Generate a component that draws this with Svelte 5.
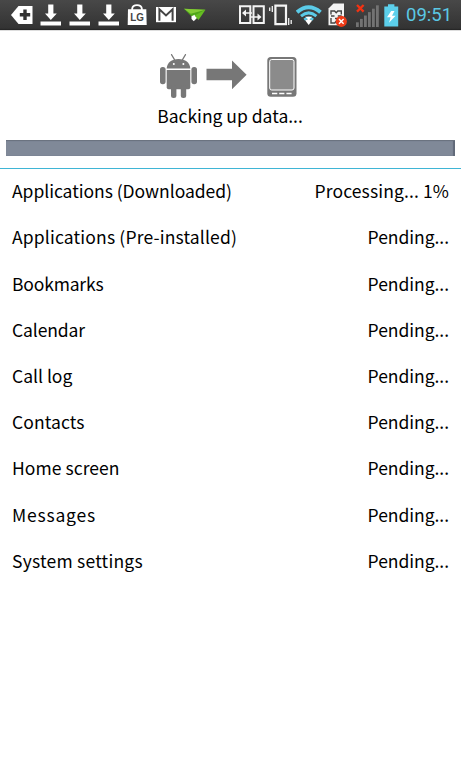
<script>
  const rows = [
    { name: 'Applications (Downloaded)', state: 'Processing... 1%', track: -0.04, stateTrack: 0.12 },
    { name: 'Applications (Pre-installed)', state: 'Pending...', track: 0.16, stateTrack: -0.04 },
    { name: 'Bookmarks', state: 'Pending...', track: -0.18, stateTrack: -0.04 },
    { name: 'Calendar', state: 'Pending...', track: -0.12, stateTrack: -0.04 },
    { name: 'Call log', state: 'Pending...', track: 0, stateTrack: -0.04 },
    { name: 'Contacts', state: 'Pending...', track: 0.1, stateTrack: -0.04 },
    { name: 'Home screen', state: 'Pending...', track: 0.06, stateTrack: -0.04 },
    { name: 'Messages', state: 'Pending...', track: 0.78, stateTrack: -0.04 },
    { name: 'System settings', state: 'Pending...', track: 0.22, stateTrack: -0.04 }
  ];
  const downloads = [1, 2, 3];
  const bars = [0, 1, 2, 3, 4, 5];
</script>

<div class="screen">
  <header class="status">
    <div class="group left">
      <svg width="26" height="30" viewBox="0 0 26 30">
        <path d="M0 15 7.5 6H21.5V24H7.5Z" fill="#fff" />
        <path d="M14 9.5V20M8.8 14.7H19.2" stroke="#333" stroke-width="3.4" />
      </svg>
      {#each downloads as d (d)}
        <svg width="29" height="30" viewBox="0 0 29 30">
          <path d="M8.2 4.5h5.2v9h3.4L10.8 20 5 13.5h3.2Z" fill="#fff" />
          <path d="M.5 21.5h20.5v4H.5Z" fill="#fff" />
        </svg>
      {/each}
      <svg width="29" height="30" viewBox="0 0 29 30">
        <path d="M5.2 11V8.5q.5-3.4 4.8-3.4t4.8 3.4V11" fill="none" stroke="#fff" stroke-width="1.8" />
        <path d="M1 9.3H19.3L19.7 25H.7Z" fill="#fff" />
        <text x="3.2" y="21.3" class="lg" textLength="13.7" lengthAdjust="spacingAndGlyphs">LG</text>
      </svg>
      <svg width="28" height="30" viewBox="0 0 28 30">
        <path d="M0 7h20v15.2H0Z" fill="#fff" />
        <path d="M3.4 20.7V9.2L10 15.4 16.6 9.2v11.5" fill="none" stroke="#444" stroke-width="2" />
      </svg>
      <svg width="22" height="30" viewBox="0 0 22 30">
        <path d="M0 8.8 21.5 9.8 11 20Z" fill="#4ea619" />
        <path d="M0 8.8 21.5 9.8 6.8 13.8Z" fill="#85cc36" />
        <path d="m7.5 16.2 3.2-1.4 2.6 2.7-3.5 3.8-2.3-2.4Z" fill="#fff" />
        <path d="M21.5 9.8 14.5 20l-4-4.5Z" fill="#65bc21" />
      </svg>
    </div>
    <div class="group right">
      <svg width="30" height="30" viewBox="0 0 30 30">
        <path d="M1 6.2h10.3v16.8H1ZM14.5 6.2h10.3v16.8H14.5Z" fill="none" stroke="#f4f4f4" stroke-width="2" />
        <path d="M5 13h8M12 17h8" stroke="#f4f4f4" stroke-width="1.6" />
        <path d="m3 13 4-3.6v7.2ZM22.5 17l-4-3.6v7.2Z" fill="#f4f4f4" />
      </svg>
      <svg width="27" height="30" viewBox="0 0 27 30">
        <path d="M6.4 5.7H17v18.5H6.4Z" fill="none" stroke="#f4f4f4" stroke-width="2.2" />
        <path d="M3.3 6v6M.7 7.5v3.4M19.7 18v7M22.2 20v4" stroke="#f4f4f4" stroke-width="1.3" />
      </svg>
      <svg width="31" height="30" viewBox="0 0 31 30">
        <g fill="none" stroke="#5bcbe8">
          <path d="M1 12.2Q12.7 2.2 24.5 12.2" stroke-width="4" />
          <path d="M5 16.1Q12.7 9.7 20.4 16.1" stroke-width="3" />
          <path d="M8.3 19.7Q12.7 16.2 17.1 19.7" stroke-width="2.6" />
        </g>
        <path d="m9.3 20.5 3.4-1.8 3.4 1.8-3.4 4.5Z" fill="#fff" />
        <path d="M9.2 16.8h7l-3.5 3Z" fill="#fff" />
      </svg>
      <svg width="29" height="30" viewBox="0 0 29 30">
        <path d="M1.5 8.5 6.5 3.5H17V25.3H1.5Z" fill="#f4f4f4" />
        <path d="M4 14.5V11h3.6l1.6 1.8 1.6-1.8h3.5v3.5M4 18v5h3.8l1.5-2M4 16h3.5M10.8 16h3.8M8 18.5h4" fill="none" stroke="#444" stroke-width="1.4" />
        <circle cx="14.3" cy="21.4" r="5.6" fill="#ee3b18" />
        <path d="m12 19.1 4.6 4.6m0-4.6L12 23.7" stroke="#fff" stroke-width="1.4" />
      </svg>
      <svg width="28" height="30" viewBox="0 0 28 30">
        {#each bars as b (b)}
          <rect x={b * 4} y={22.3 - b * 3.4} width="2.8" height={4.7 + b * 3.4} fill="#737373" />
        {/each}
        <path d="m1 5 6.6 6.6m0-6.6L1 11.6" stroke="#f33212" stroke-width="2.3" />
      </svg>
      <svg width="22" height="30" viewBox="0 0 22 30">
        <path d="M4 4.2h6.4v2.4h3.8v20H.3v-20H4Z" fill="#5ccfeb" />
        <path d="M7.2 11 3 17.2h3.6l-1.6 5.6 6.6-7H8l2.5-4.8Z" fill="#fff" />
      </svg>
      <span class="clock">09:51</span>
    </div>
  </header>

  <section class="progress">
    <div class="transfer">
      <svg width="40" height="48" viewBox="0 0 40 48">
        <g fill="#777">
          <path d="M6.7 17.5C7.2 11.5 11.5 8 18.5 8s11.3 3.5 11.8 9.5Z" />
          <path d="M6.7 19h23.6v17.3q0 2-2 2H8.7q-2 0-2-2Z" />
          <rect x="0" y="16" width="5.6" height="17.2" rx="2.6" />
          <rect x="31.4" y="16" width="5.6" height="17.2" rx="2.6" />
          <rect x="11" y="34" width="5.4" height="13" rx="2.5" />
          <rect x="20.8" y="34" width="5.4" height="13" rx="2.5" />
        </g>
        <path d="m11.5 3.6 3 5M25.5 3.6l-3 5" stroke="#777" stroke-width="1.2" stroke-linecap="round" />
        <circle cx="13.8" cy="13" r="1" fill="#fff" />
        <circle cx="23.4" cy="13" r="1" fill="#fff" />
      </svg>
      <svg class="arrow" width="41" height="48" viewBox="0 0 41 48">
        <path d="M0.5 17.8h25.5V9.6L40.6 23.8 26 38.3v-9H.5Z" fill="#777" />
      </svg>
      <svg width="30" height="48" viewBox="0 0 30 48">
        <rect x=".3" y="5.9" width="29.2" height="39.8" rx="3.5" fill="#777" />
        <rect x="2.7" y="8.5" width="24.3" height="30.5" rx="2" fill="#8b8b8b" stroke="#fff" stroke-width="1" />
        <path d="M5 42.5h5.3M12.2 42.5h5.2M19.4 42.5h5.2" stroke="#fff" stroke-width="1.7" />
      </svg>
    </div>
    <p class="caption">Backing up data...</p>
    <div class="bar"></div>
  </section>

  <ul class="list">
    {#each rows as row (row.name)}
      <li>
        <span style="letter-spacing: {row.track}px">{row.name}</span>
        <span style="letter-spacing: {row.stateTrack}px">{row.state}</span>
      </li>
    {/each}
  </ul>
</div>

<style>
  :global(body) {
    margin: 0;
    background: #fff;
  }
  .screen {
    height: 768px;
    overflow: hidden;
    background: #fff;
    color: #000;
    font-family: 'Noto Sans CJK KR', 'Open Sans', sans-serif;
    font-size: 17.5px;
  }
  .status {
    box-sizing: border-box;
    height: 30px;
    padding: 0 9px 0 11px;
    display: flex;
    justify-content: space-between;
    background: linear-gradient(#484848, #333 94%, #222);
    box-shadow: 0 1px #ddd;
  }
  .group {
    display: flex;
  }
  .group svg,
  .transfer svg {
    display: block;
    flex: none;
  }
  .left svg:first-child {
    margin-right: 3px;
  }
  .lg {
    font: bold 11.5px 'Liberation Sans', sans-serif;
    fill: #444;
  }
  .clock {
    width: 46px;
    font: 18.5px/31px Roboto, sans-serif;
    color: #5bc8e4;
    white-space: nowrap;
  }
  .progress {
    box-sizing: border-box;
    height: 139px;
    padding: 21px 6px 0;
    border-bottom: 1px solid #3fb5d5;
  }
  .transfer {
    display: flex;
    padding-left: 154px;
  }
  .arrow {
    margin: 0 20px 0 6px;
  }
  .caption {
    margin: 3px 0 0;
    padding-right: 1px;
    height: 28px;
    line-height: 28px;
    text-align: center;
  }
  .bar {
    box-sizing: border-box;
    height: 16px;
    margin-top: 10px;
    background: #808998;
    border-top: 1px solid #6b7380;
    box-shadow: inset -2px 0 1px #606978;
  }
  .list {
    margin: -1.4px 0 0;
    padding: 0 12px;
    list-style: none;
  }
  .list li {
    display: flex;
    justify-content: space-between;
    align-items: center;
    height: 46.2px;
    white-space: nowrap;
  }
</style>
